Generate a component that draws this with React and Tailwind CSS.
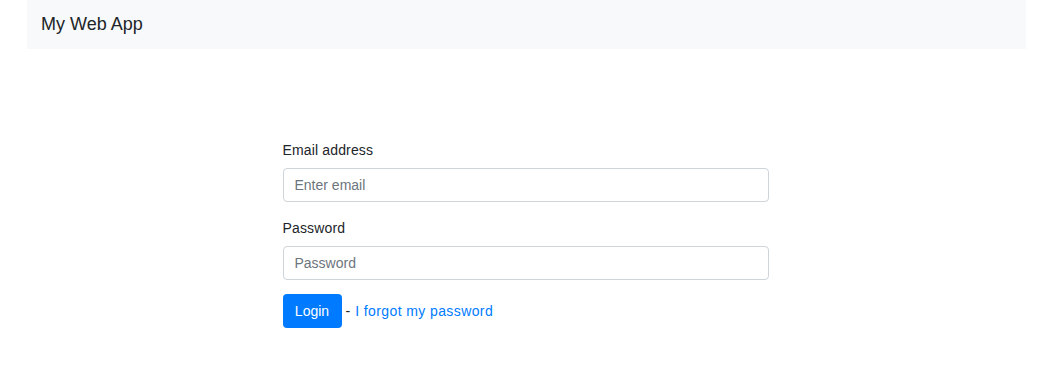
export default function App() {
  return (
    <div className="min-h-[389px] bg-white text-[#212529]" style={{ fontFamily: '"Liberation Sans", Arial, sans-serif' }}>
      <nav className="ml-[27px] w-[999px] h-[49px] bg-[#f8f9fa] flex items-center px-[14px]">
        <span className="text-[18px] text-[#212529]">My Web App</span>
      </nav>
      <form className="mx-auto w-[486px] mt-[91px]" onSubmit={(e) => e.preventDefault()}>
        <div className="mb-[16px]">
          <label className="block text-[14px] leading-[21px] mb-[7px] tracking-[0.15px]">Email address</label>
          <input
            type="email"
            placeholder="Enter email"
            className="block w-full h-[34px] px-[11px] text-[14px] border border-[#ced4da] rounded-[4px] placeholder:text-[#6c757d] outline-none"
          />
        </div>
        <div className="mb-[14px]">
          <label className="block text-[14px] leading-[21px] mb-[7px] tracking-[0.15px]">Password</label>
          <input
            type="password"
            placeholder="Password"
            className="block w-full h-[34px] px-[11px] text-[14px] border border-[#ced4da] rounded-[4px] placeholder:text-[#6c757d] outline-none"
          />
        </div>
        <div className="flex items-center text-[14px]">
          <button type="submit" className="h-[34px] w-[59px] bg-[#007bff] text-white rounded-[4px] text-[14px]">
            Login
          </button>
          <span className="ml-[4px]">-</span>
          <a href="#" className="ml-[5px] text-[#007bff] tracking-[0.4px]">I forgot my password</a>
        </div>
      </form>
    </div>
  );
}
